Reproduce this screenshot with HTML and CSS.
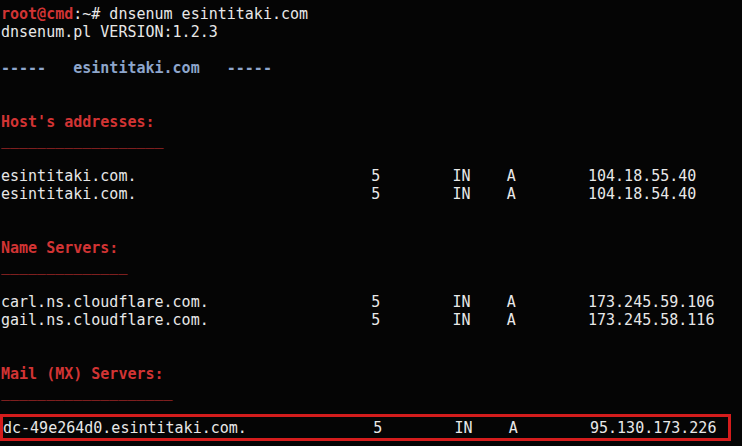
FILE: index.html
```html
<!DOCTYPE html>
<html>
<head>
<meta charset="utf-8">
<link rel="stylesheet" href="styles.css">
</head>
<body>
<div class="term">
<div class="ln"><span class="red b">root@cmd</span>:~# dnsenum esintitaki.com</div>
<div class="ln">dnsenum.pl VERSION:1.2.3</div>
<div class="ln"> </div>
<div class="ln blue b">-----   esintitaki.com   -----</div>
<div class="ln"> </div>
<div class="ln"> </div>
<div class="ln red b">Host's addresses:</div>
<div class="ln red">__________________</div>
<div class="ln"> </div>
<div class="ln">esintitaki.com.                          5        IN    A        104.18.55.40</div>
<div class="ln">esintitaki.com.                          5        IN    A        104.18.54.40</div>
<div class="ln"> </div>
<div class="ln"> </div>
<div class="ln red b">Name Servers:</div>
<div class="ln red">______________</div>
<div class="ln"> </div>
<div class="ln">carl.ns.cloudflare.com.                  5        IN    A        173.245.59.106</div>
<div class="ln">gail.ns.cloudflare.com.                  5        IN    A        173.245.58.116</div>
<div class="ln"> </div>
<div class="ln"> </div>
<div class="ln red b">Mail (MX) Servers:</div>
<div class="ln red">___________________</div>
<div class="ln"> </div>
<div class="ln hl">dc-49e264d0.esintitaki.com.              5        IN    A        95.130.173.226</div>
</div>
</body>
</html>
```
FILE: styles.css
```css
html, body {
  margin: 0;
  padding: 0;
  background: #050505;
  height: 100%;
  overflow: hidden;
}
.term {
  font-family: "DejaVu Sans Mono", monospace;
  font-size: 15px;
  line-height: 18px;
  color: #e8e8e8;
  padding: 5px 0 0 1px;
}
.ln {
  height: 18px;
  white-space: pre;
}
.red { color: #d23434; }
.blue { color: #8ea6cc; }
.b { font-weight: bold; }
.hl {
  box-sizing: border-box;
  width: 731px;
  height: 27px;
  margin: -5px 0 0 -1px;
  padding: 2px 0 0 0;
  border: 3px solid #d41c1c;
}
```
